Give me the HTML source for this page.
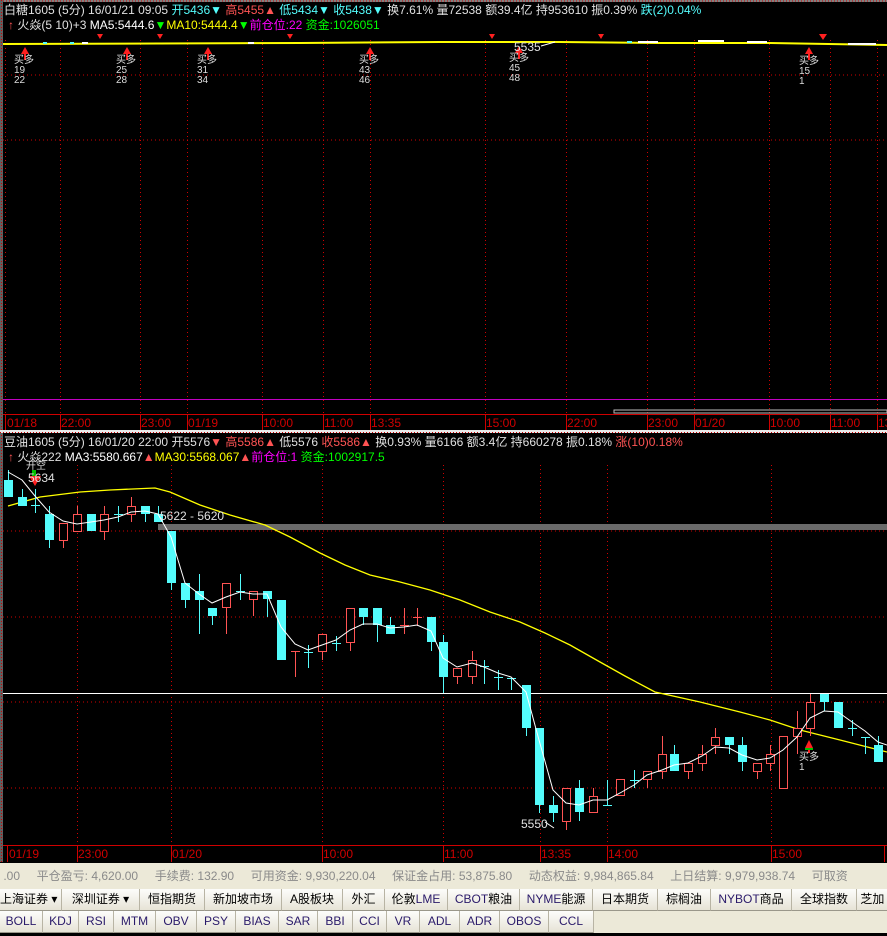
<!DOCTYPE html>
<html><head><meta charset="utf-8"><style>
*{margin:0;padding:0;box-sizing:border-box}
body{width:887px;height:936px;background:#000;position:relative;overflow:hidden;font-family:"Liberation Sans","WenQuanYi Zen Hei","Noto Sans CJK SC",sans-serif;font-size:12px;color:#fff}
.t{position:absolute;white-space:nowrap;line-height:14px}
.w{color:#e0e0e0}.c{color:#54FCFC}.r{color:#FF5454}.y{color:#FFFF00}.m{color:#FF00FF}.g{color:#00FF00}
.ax{position:absolute;color:#D00000;font-size:12px;line-height:14px}
#status{position:absolute;left:0;top:863px;width:887px;height:26px;background:#ECE9D8;color:#8a8a8a;font-size:12px;line-height:26px;white-space:nowrap}
.row{position:absolute;left:0;width:887px;background:#ECE9D8;white-space:nowrap;display:flex}
.b{height:100%;border-right:1px solid #b8b4a4;border-bottom:1px solid #9a978a;background:linear-gradient(#fdfdfb,#e6e3d6);color:#000;font-size:12px;text-align:center;flex:none}
.b2{color:#2a1a6a}
</style></head><body>
<svg width="887" height="936" style="position:absolute;left:0;top:0">
<!-- frame -->
<rect x="0" y="0" width="887" height="2" fill="#808080"/>
<line x1="0" y1="1" x2="887" y2="1" stroke="#c00" stroke-dasharray="1 2"/>
<rect x="0" y="0" width="3" height="862" fill="#606060"/>
<line x1="1.5" y1="0" x2="1.5" y2="862" stroke="#c00" stroke-dasharray="1 2"/>
<!-- top grid -->
<g stroke="#D00000" stroke-dasharray="1 3">
<line x1="5" y1="35" x2="887" y2="35" stroke-dasharray="0"/>
<line x1="3" y1="75" x2="887" y2="75"/>
<line x1="3" y1="140" x2="887" y2="140"/>
<line x1="5.5" y1="40" x2="5.5" y2="414"/><line x1="60.5" y1="40" x2="60.5" y2="414"/><line x1="140.5" y1="40" x2="140.5" y2="414"/><line x1="187.5" y1="40" x2="187.5" y2="414"/><line x1="262.5" y1="40" x2="262.5" y2="414"/><line x1="323.5" y1="40" x2="323.5" y2="414"/><line x1="370.5" y1="40" x2="370.5" y2="414"/><line x1="485.5" y1="40" x2="485.5" y2="414"/><line x1="566.5" y1="40" x2="566.5" y2="414"/><line x1="647.5" y1="40" x2="647.5" y2="414"/><line x1="694.5" y1="40" x2="694.5" y2="414"/><line x1="769.5" y1="40" x2="769.5" y2="414"/><line x1="830.5" y1="40" x2="830.5" y2="414"/><line x1="877.5" y1="40" x2="877.5" y2="414"/>
</g>
<line x1="3" y1="35" x2="887" y2="35" stroke="#000"/>
<line x1="3" y1="399.5" x2="887" y2="399.5" stroke="#C000C0"/>
<rect x="614" y="410" width="273" height="3" fill="none" stroke="#bbb"/>
<line x1="3" y1="414.5" x2="887" y2="414.5" stroke="#D00000"/>
<g stroke="#D00000"><line x1="5.5" y1="414" x2="5.5" y2="430"/><line x1="60.5" y1="414" x2="60.5" y2="430"/><line x1="140.5" y1="414" x2="140.5" y2="430"/><line x1="187.5" y1="414" x2="187.5" y2="430"/><line x1="262.5" y1="414" x2="262.5" y2="430"/><line x1="323.5" y1="414" x2="323.5" y2="430"/><line x1="370.5" y1="414" x2="370.5" y2="430"/><line x1="485.5" y1="414" x2="485.5" y2="430"/><line x1="566.5" y1="414" x2="566.5" y2="430"/><line x1="647.5" y1="414" x2="647.5" y2="430"/><line x1="694.5" y1="414" x2="694.5" y2="430"/><line x1="769.5" y1="414" x2="769.5" y2="430"/><line x1="830.5" y1="414" x2="830.5" y2="430"/><line x1="877.5" y1="414" x2="877.5" y2="430"/></g>
<rect x="0" y="430" width="887" height="3" fill="#e8e8e8"/>
<line x1="0" y1="432.5" x2="887" y2="432.5" stroke="#c00" stroke-dasharray="1 2"/>
<!-- top chart line -->
<polyline points="3,44 300,43 440,42 560,42 660,43 770,43 887,45" fill="none" stroke="#FFFF00" stroke-width="2"/>
<g fill="#fff"><rect x="82" y="42" width="6" height="2"/><rect x="248" y="42" width="6" height="2"/><rect x="638" y="41" width="20" height="2"/><rect x="698" y="40" width="26" height="2"/><rect x="747" y="41" width="20" height="2"/><rect x="848" y="43" width="28" height="2"/></g>
<g fill="#54FCFC"><rect x="43" y="42" width="4" height="2"/><rect x="70" y="42" width="4" height="2"/><rect x="627" y="41" width="5" height="2"/></g>
<g fill="#FF2020">
<polygon points="25,47 21,54 29,54"/><rect x="24" y="54" width="2" height="6"/>
<polygon points="127,47 123,54 131,54"/><rect x="126" y="54" width="2" height="6"/>
<polygon points="208,47 204,54 212,54"/><rect x="207" y="54" width="2" height="6"/>
<polygon points="370,47 366,54 374,54"/><rect x="369" y="54" width="2" height="6"/>
<polygon points="519,46 515,53 523,53"/><rect x="518" y="53" width="2" height="6"/>
<polygon points="809,47 805,54 813,54"/><rect x="808" y="54" width="2" height="6"/>
<polygon points="97,34 103,34 100,39"/><polygon points="157,34 163,34 160,39"/><polygon points="287,34 293,34 290,39"/><polygon points="489,34 495,34 492,39"/><polygon points="598,34 604,34 601,39"/><polygon points="819,34 827,34 823,40"/>
</g>
<!-- bottom grid -->
<g stroke="#D00000" stroke-dasharray="1 3">
<line x1="3" y1="531" x2="887" y2="531"/><line x1="3" y1="617" x2="887" y2="617"/><line x1="3" y1="702" x2="887" y2="702"/><line x1="3" y1="788" x2="887" y2="788"/>
<line x1="77.5" y1="465" x2="77.5" y2="845"/><line x1="171.5" y1="465" x2="171.5" y2="845"/><line x1="322.5" y1="465" x2="322.5" y2="845"/><line x1="443.5" y1="465" x2="443.5" y2="845"/><line x1="540.5" y1="465" x2="540.5" y2="845"/><line x1="607.5" y1="465" x2="607.5" y2="845"/><line x1="771.5" y1="465" x2="771.5" y2="845"/>
</g>
<rect x="158" y="524" width="729" height="6" fill="#6a6a6a"/>
<line x1="3" y1="693.5" x2="887" y2="693.5" stroke="#fff"/>
<line x1="3" y1="845.5" x2="887" y2="845.5" stroke="#D00000"/>
<g stroke="#D00000"><line x1="7.5" y1="845" x2="7.5" y2="862"/><line x1="77.5" y1="845" x2="77.5" y2="862"/><line x1="171.5" y1="845" x2="171.5" y2="862"/><line x1="322.5" y1="845" x2="322.5" y2="862"/><line x1="443.5" y1="845" x2="443.5" y2="862"/><line x1="540.5" y1="845" x2="540.5" y2="862"/><line x1="607.5" y1="845" x2="607.5" y2="862"/><line x1="771.5" y1="845" x2="771.5" y2="862"/><line x1="884.5" y1="845" x2="884.5" y2="862"/></g>
<!-- MA30 -->
<polyline points="8,506 40,497 80,492 110,490 155,488 170,492 200,505 230,515 265,525 290,537 320,553 345,565 370,575 400,582 430,590 460,600 490,612 520,622 545,633 570,645 600,662 625,676 655,692 700,702 740,712 770,720 800,730 840,740 887,752" fill="none" stroke="#FFFF00" stroke-width="1.3"/>
<!-- candles -->
<g stroke="#54FCFC" stroke-width="1">
<line x1="8.5" y1="470" x2="8.5" y2="497"/><line x1="22.5" y1="489" x2="22.5" y2="506"/><line x1="35.5" y1="489" x2="35.5" y2="513"/><line x1="31" y1="505.5" x2="40" y2="505.5"/><line x1="49.5" y1="506" x2="49.5" y2="548"/><line x1="91.5" y1="514" x2="91.5" y2="531"/><line x1="118.5" y1="506" x2="118.5" y2="522"/><line x1="114" y1="514.5" x2="123" y2="514.5"/><line x1="145.5" y1="506" x2="145.5" y2="522"/><line x1="158.5" y1="506" x2="158.5" y2="522"/><line x1="171.5" y1="531" x2="171.5" y2="590"/><line x1="185.5" y1="583" x2="185.5" y2="608"/><line x1="199.5" y1="574" x2="199.5" y2="634"/><line x1="212.5" y1="608" x2="212.5" y2="625"/><line x1="240.5" y1="574" x2="240.5" y2="600"/><line x1="236" y1="591.5" x2="245" y2="591.5"/><line x1="267.5" y1="591" x2="267.5" y2="617"/><line x1="308.5" y1="645" x2="308.5" y2="668"/><line x1="304" y1="652.5" x2="313" y2="652.5"/><line x1="336.5" y1="636" x2="336.5" y2="651"/><line x1="332" y1="643.5" x2="341" y2="643.5"/><line x1="363.5" y1="608" x2="363.5" y2="625"/><line x1="377.5" y1="608" x2="377.5" y2="642"/><line x1="390.5" y1="617" x2="390.5" y2="634"/><line x1="431.5" y1="617" x2="431.5" y2="651"/><line x1="443.5" y1="635" x2="443.5" y2="693"/><line x1="484.5" y1="660" x2="484.5" y2="684"/><line x1="480" y1="666.5" x2="489" y2="666.5"/><line x1="498.5" y1="670" x2="498.5" y2="690"/><line x1="494" y1="677.5" x2="503" y2="677.5"/><line x1="511.5" y1="678" x2="511.5" y2="690"/><line x1="507" y1="678.5" x2="516" y2="678.5"/><line x1="526.5" y1="685" x2="526.5" y2="736"/><line x1="539.5" y1="728" x2="539.5" y2="813"/><line x1="553.5" y1="796" x2="553.5" y2="822"/><line x1="579.5" y1="780" x2="579.5" y2="821"/><line x1="607.5" y1="780" x2="607.5" y2="805"/><line x1="603" y1="805.5" x2="612" y2="805.5"/><line x1="634.5" y1="770" x2="634.5" y2="788"/><line x1="630" y1="780.5" x2="639" y2="780.5"/><line x1="674.5" y1="745" x2="674.5" y2="771"/><line x1="729.5" y1="737" x2="729.5" y2="754"/><line x1="742.5" y1="737" x2="742.5" y2="771"/><line x1="824.5" y1="694" x2="824.5" y2="711"/><line x1="838.5" y1="702" x2="838.5" y2="728"/><line x1="852.5" y1="720" x2="852.5" y2="736"/><line x1="848" y1="728.5" x2="857" y2="728.5"/><line x1="865.5" y1="737" x2="865.5" y2="754"/><line x1="861" y1="737.5" x2="870" y2="737.5"/><line x1="878.5" y1="736" x2="878.5" y2="762"/>
</g>
<g fill="#54FCFC">
<rect x="4" y="480" width="9" height="17"/><rect x="18" y="497" width="9" height="9"/><rect x="45" y="514" width="9" height="26"/><rect x="87" y="514" width="9" height="17"/><rect x="141" y="506" width="9" height="8"/><rect x="154" y="514" width="9" height="8"/><rect x="167" y="531" width="9" height="52"/><rect x="181" y="583" width="9" height="17"/><rect x="195" y="591" width="9" height="9"/><rect x="208" y="608" width="9" height="8"/><rect x="263" y="591" width="9" height="8"/><rect x="277" y="600" width="9" height="60"/><rect x="359" y="608" width="9" height="9"/><rect x="373" y="608" width="9" height="17"/><rect x="386" y="625" width="9" height="9"/><rect x="427" y="617" width="9" height="25"/><rect x="439" y="642" width="9" height="35"/><rect x="522" y="685" width="9" height="43"/><rect x="535" y="728" width="9" height="77"/><rect x="549" y="805" width="9" height="8"/><rect x="575" y="788" width="9" height="24"/><rect x="670" y="754" width="9" height="17"/><rect x="725" y="737" width="9" height="8"/><rect x="738" y="745" width="9" height="17"/><rect x="820" y="694" width="9" height="8"/><rect x="834" y="702" width="9" height="26"/><rect x="874" y="745" width="9" height="17"/>
</g>
<g stroke="#FF5454" fill="#000">
<line x1="63.5" y1="523" x2="63.5" y2="548"/><line x1="77.5" y1="506" x2="77.5" y2="531"/><line x1="104.5" y1="506" x2="104.5" y2="540"/><line x1="131.5" y1="497" x2="131.5" y2="522"/><line x1="226.5" y1="583" x2="226.5" y2="634"/><line x1="253.5" y1="591" x2="253.5" y2="616"/><line x1="295.5" y1="651" x2="295.5" y2="677"/><line x1="291" y1="651.5" x2="300" y2="651.5"/><line x1="322.5" y1="634" x2="322.5" y2="660"/><line x1="350.5" y1="608" x2="350.5" y2="651"/><line x1="404.5" y1="608" x2="404.5" y2="634"/><line x1="400" y1="625.5" x2="409" y2="625.5"/><line x1="417.5" y1="608" x2="417.5" y2="626"/><line x1="413" y1="617.5" x2="422" y2="617.5"/><line x1="457.5" y1="668" x2="457.5" y2="684"/><line x1="472.5" y1="651" x2="472.5" y2="684"/><line x1="566.5" y1="788" x2="566.5" y2="830"/><line x1="593.5" y1="788" x2="593.5" y2="812"/><line x1="620.5" y1="779" x2="620.5" y2="795"/><line x1="647.5" y1="771" x2="647.5" y2="788"/><line x1="662.5" y1="736" x2="662.5" y2="779"/><line x1="688.5" y1="763" x2="688.5" y2="779"/><line x1="702.5" y1="745" x2="702.5" y2="771"/><line x1="715.5" y1="728" x2="715.5" y2="754"/><line x1="757.5" y1="763" x2="757.5" y2="779"/><line x1="770.5" y1="745" x2="770.5" y2="771"/><line x1="797.5" y1="711" x2="797.5" y2="754"/><line x1="810.5" y1="694" x2="810.5" y2="736"/>
<rect x="59.5" y="523.5" width="8" height="17"/><rect x="73.5" y="514.5" width="8" height="17"/><rect x="100.5" y="514.5" width="8" height="17"/><rect x="127.5" y="506.5" width="8" height="8"/><rect x="222.5" y="583.5" width="8" height="24"/><rect x="249.5" y="591.5" width="8" height="8"/><rect x="318.5" y="634.5" width="8" height="17"/><rect x="346.5" y="608.5" width="8" height="34"/><rect x="453.5" y="668.5" width="8" height="8"/><rect x="468.5" y="660.5" width="8" height="16"/><rect x="562.5" y="788.5" width="8" height="33"/><rect x="589.5" y="796.5" width="8" height="16"/><rect x="616.5" y="779.5" width="8" height="16"/><rect x="643.5" y="771.5" width="8" height="8"/><rect x="658.5" y="754.5" width="8" height="17"/><rect x="684.5" y="763.5" width="8" height="8"/><rect x="698.5" y="754.5" width="8" height="9"/><rect x="711.5" y="737.5" width="8" height="8"/><rect x="753.5" y="763.5" width="8" height="8"/><rect x="766.5" y="754.5" width="8" height="9"/><rect x="779.5" y="736.5" width="8" height="52"/><rect x="793.5" y="728.5" width="8" height="8"/><rect x="806.5" y="702.5" width="8" height="26"/>
</g>
<!-- MA3 -->
<polyline points="8,472 22,480 35,496 49,512 63,521 77,524 91,522 104,520 118,517 131,512 145,511 158,514 171,537 185,583 199,594 212,603 226,597 240,592 253,594 267,594 281,627 295,644 308,650 322,645 336,640 350,630 363,624 377,624 390,628 404,627 417,625 431,631 443,658 457,667 472,663 484,667 498,673 511,677 526,692 539,740 553,790 566,803 579,805 593,800 607,800 620,793 634,785 647,775 662,770 674,765 688,763 702,756 715,747 729,748 742,755 757,760 770,758 783,750 797,737 810,718 824,711 838,712 852,722 865,731 878,742 887,745" fill="none" stroke="#fff" stroke-width="1"/>
<polygon points="29,476 41,476 35,486" fill="#FF2020"/>
<rect x="32" y="470" width="4" height="6" fill="#00C000"/>
<polygon points="809,740 805,748 813,748" fill="#FF2020"/><rect x="808" y="748" width="2" height="5" fill="#FF2020"/><rect x="805" y="748" width="8" height="2" fill="#00C000"/>
<polyline points="545,822 554,828" stroke="#fff" fill="none"/>
<polyline points="541,46 555,42" stroke="#fff" fill="none"/>
</svg>

<!-- top texts -->
<div class="t" style="left:4px;top:3px"><span class="w">白糖1605 (5分) 16/01/21 09:05 </span><span class="c">开5436▼</span> <span class="r">高5455▲</span> <span class="c">低5434▼ 收5438▼</span> <span class="w">换7.61% 量72538 额39.4亿 持953610 振0.39%</span> <span class="c">跌(2)0.04%</span></div>
<div class="t" style="left:8px;top:18px"><span class="r">↑</span> <span class="w">火焱(5 10)+3</span> <span style="color:#fff">MA5:5444.6</span><span class="g">▼</span><span class="y">MA10:5444.4</span><span class="g">▼</span><span class="m">前仓位:22</span> <span class="g">资金:1026051</span></div>
<div class="t" style="left:14px;top:56px;font-size:10px;line-height:10px;color:#ddd">买多<br>19<br>22</div>
<div class="t" style="left:116px;top:56px;font-size:10px;line-height:10px;color:#ddd">买多<br>25<br>28</div>
<div class="t" style="left:197px;top:56px;font-size:10px;line-height:10px;color:#ddd">买多<br>31<br>34</div>
<div class="t" style="left:359px;top:56px;font-size:10px;line-height:10px;color:#ddd">买多<br>43<br>46</div>
<div class="t" style="left:509px;top:54px;font-size:10px;line-height:10px;color:#ddd">买多<br>45<br>48</div>
<div class="t" style="left:799px;top:57px;font-size:10px;line-height:10px;color:#ddd">买多<br>15<br>1</div>
<div class="t w" style="left:514px;top:40px">5535</div>
<div class="ax" style="left:7px;top:416px">01/18</div><div class="ax" style="left:61px;top:416px">22:00</div><div class="ax" style="left:141px;top:416px">23:00</div><div class="ax" style="left:188px;top:416px">01/19</div><div class="ax" style="left:263px;top:416px">10:00</div><div class="ax" style="left:324px;top:416px">11:00</div><div class="ax" style="left:371px;top:416px">13:35</div><div class="ax" style="left:486px;top:416px">15:00</div><div class="ax" style="left:567px;top:416px">22:00</div><div class="ax" style="left:648px;top:416px">23:00</div><div class="ax" style="left:695px;top:416px">01/20</div><div class="ax" style="left:770px;top:416px">10:00</div><div class="ax" style="left:831px;top:416px">11:00</div><div class="ax" style="left:878px;top:416px">13</div>

<!-- bottom texts -->
<div class="t" style="left:4px;top:435px"><span class="w">豆油1605 (5分) 16/01/20 22:00 开5576</span><span class="r">▼</span> <span class="r">高5586▲</span> <span class="w">低5576</span> <span class="r">收5586▲</span> <span class="w">换0.93% 量6166 额3.4亿 持660278 振0.18%</span> <span class="r">涨(10)0.18%</span></div>
<div class="t" style="left:8px;top:450px"><span class="r">↑</span> <span class="w">火焱222</span> <span style="color:#fff">MA3:5580.667</span><span class="r">▲</span><span class="y">MA30:5568.067</span><span class="r">▲</span><span class="m">前仓位:1</span> <span class="g">资金:1002917.5</span></div>
<div class="t" style="left:26px;top:462px;font-size:10px;line-height:10px;color:#ddd">开空</div>
<div class="t w" style="left:28px;top:471px">5634</div>
<div class="t w" style="left:160px;top:509px">5622 - 5620</div>
<div class="t" style="left:799px;top:753px;font-size:10px;line-height:10px;color:#ddd">买多<br>1</div>
<div class="t w" style="left:521px;top:817px">5550</div>
<div class="ax" style="left:9px;top:847px">01/19</div><div class="ax" style="left:78px;top:847px">23:00</div><div class="ax" style="left:172px;top:847px">01/20</div><div class="ax" style="left:323px;top:847px">10:00</div><div class="ax" style="left:444px;top:847px">11:00</div><div class="ax" style="left:541px;top:847px">13:35</div><div class="ax" style="left:608px;top:847px">14:00</div><div class="ax" style="left:772px;top:847px">15:00</div>

<div id="status">&nbsp;.00&nbsp;&nbsp;&nbsp;&nbsp;&nbsp;平仓盈亏: 4,620.00&nbsp;&nbsp;&nbsp;&nbsp;&nbsp;手续费: 132.90&nbsp;&nbsp;&nbsp;&nbsp;&nbsp;可用资金: 9,930,220.04&nbsp;&nbsp;&nbsp;&nbsp;&nbsp;保证金占用: 53,875.80&nbsp;&nbsp;&nbsp;&nbsp;&nbsp;动态权益: 9,984,865.84&nbsp;&nbsp;&nbsp;&nbsp;&nbsp;上日结算: 9,979,938.74&nbsp;&nbsp;&nbsp;&nbsp;&nbsp;可取资</div>
<div class="row" style="top:889px;height:22px;line-height:21px">
<div class="b" style="width:62px;text-align:left">上海证券 ▾</div><div class="b" style="width:78px">深圳证券 ▾</div><div class="b" style="width:65px">恒指期货</div><div class="b" style="width:77px">新加坡市场</div><div class="b" style="width:61px">A股板块</div><div class="b" style="width:42px">外汇</div><div class="b" style="width:63px">伦敦<span class="b2">LME</span></div><div class="b" style="width:72px"><span class="b2">CBOT</span>粮油</div><div class="b" style="width:73px"><span class="b2">NYME</span>能源</div><div class="b" style="width:65px">日本期货</div><div class="b" style="width:53px">棕榈油</div><div class="b" style="width:81px"><span class="b2">NYBOT</span>商品</div><div class="b" style="width:65px">全球指数</div><div class="b" style="width:40px;text-align:left">&nbsp;芝加</div>
</div>
<div class="row" style="top:911px;height:22px;line-height:21px">
<div class="b b2" style="width:43px">BOLL</div><div class="b b2" style="width:36px">KDJ</div><div class="b b2" style="width:35px">RSI</div><div class="b b2" style="width:42px">MTM</div><div class="b b2" style="width:41px">OBV</div><div class="b b2" style="width:39px">PSY</div><div class="b b2" style="width:43px">BIAS</div><div class="b b2" style="width:39px">SAR</div><div class="b b2" style="width:35px">BBI</div><div class="b b2" style="width:34px">CCI</div><div class="b b2" style="width:33px">VR</div><div class="b b2" style="width:40px">ADL</div><div class="b b2" style="width:40px">ADR</div><div class="b b2" style="width:49px">OBOS</div><div class="b b2" style="width:45px">CCL</div>
</div>
</body></html>
